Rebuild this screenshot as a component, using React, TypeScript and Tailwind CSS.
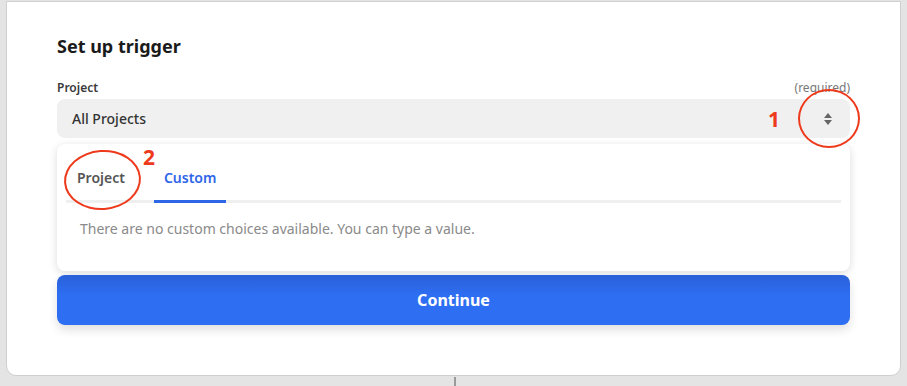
export default function App() {
  return (
    <div className="relative h-[386px] w-[907px] overflow-hidden bg-[#e4e4e4] font-['Noto_Sans',sans-serif]">
      <div className="ml-[6px] mt-px h-[375px] w-[895px] rounded-b-[10px] border border-[#cfcfcf] bg-white px-[50px] pt-[32px]">
        <h2 className="text-[18px] font-bold leading-[24px] text-[#1a1a1a]">Set up trigger</h2>

        <div className="mt-[22px] flex items-end justify-between text-[12px] leading-[16px]">
          <span className="font-semibold text-[#3a3a3a]">Project</span>
          <span className="text-[#777]">(required)</span>
        </div>

        <div className="mt-[3px] flex h-[39px] items-center justify-between rounded-[8px] bg-[#f0f0f0] pl-[15px] pr-[17px]">
          <span className="text-[14px] font-medium text-[#333]">All Projects</span>
          <svg width="10" height="14" viewBox="0 0 10 14" className="text-[#666]">
            <path d="M5 1 L9 6 H1 Z" fill="currentColor" />
            <path d="M5 13 L9 8 H1 Z" fill="currentColor" />
          </svg>
        </div>

        <div className="mt-[6px] rounded-[8px] bg-white px-[9px] pb-[33px] shadow-[0_2px_8px_rgba(0,0,0,0.14)]">
          <div className="flex h-[59px] items-end border-b-[3px] border-[#efefef]">
            <button className="mb-[-3px] px-[11px] pb-[15px] text-[14px] font-semibold text-[#555]">Project</button>
            <button className="mb-[-3px] ml-[18px] border-b-[3px] border-[#2e66e8] px-[10px] pb-[12px] text-[14px] font-semibold text-[#2e66e8]">Custom</button>
          </div>
          <p className="ml-[14px] mt-[17px] text-[14px] leading-[18px] text-[#8a8a8a]">
            There are no custom choices available. You can type a value.
          </p>
        </div>

        <button className="mt-[4px] flex h-[50px] w-full items-center justify-center rounded-[8px] bg-gradient-to-b from-[#2a60d9] to-[#2e6ef2] to-40% text-[16px] font-bold text-white shadow-[0_5px_10px_rgba(0,0,0,0.12)]">
          Continue
        </button>
      </div>

      <div className="absolute left-[454px] top-[377px] h-[9px] w-[2px] bg-[#9a9a9a]" />

      {/* annotations */}
      <div className="absolute left-[798px] top-[89px] h-[59px] w-[62px] rounded-[50%] border-2 border-[#ee3a1c]" />
      <span className="absolute left-[768px] top-[105px] text-[21px] font-bold leading-[28px] text-[#ee3a1c]">1</span>
      <div className="absolute left-[64px] top-[150px] h-[60px] w-[77px] rotate-[-4deg] rounded-[50%] border-2 border-[#ee3a1c]" />
      <span className="absolute left-[143px] top-[143px] text-[21px] font-bold leading-[28px] text-[#ee3a1c]">2</span>
    </div>
  );
}
